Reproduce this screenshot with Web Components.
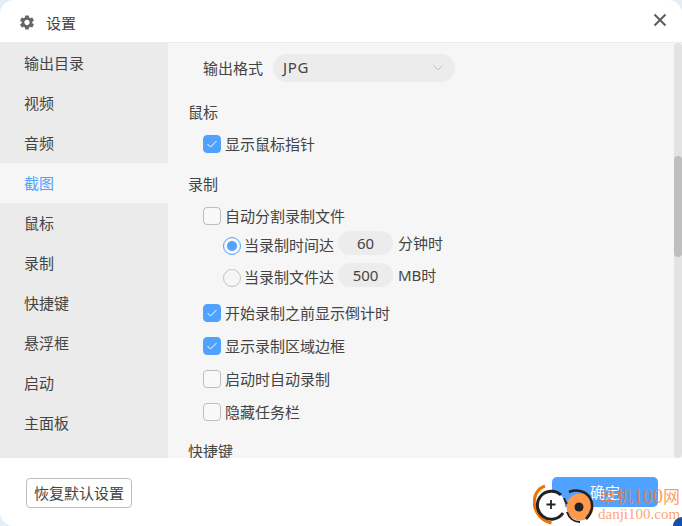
<!DOCTYPE html>
<html>
<head>
<meta charset="utf-8">
<style>
  html, body { margin: 0; height: 100%; background: #e6eef5; }
  body { font: 15px/20px "Noto Sans", "Noto Sans CJK SC", sans-serif; color: #444; overflow: hidden; }
</style>
</head>
<body>
<settings-window>
  <nav-item>输出目录</nav-item>
  <nav-item>视频</nav-item>
  <nav-item>音频</nav-item>
  <nav-item active>截图</nav-item>
  <nav-item>鼠标</nav-item>
  <nav-item>录制</nav-item>
  <nav-item>快捷键</nav-item>
  <nav-item>悬浮框</nav-item>
  <nav-item>启动</nav-item>
  <nav-item>主面板</nav-item>

  <select-row slot="content" label="输出格式" value="JPG"></select-row>

  <section-title slot="content" style="margin-top:20px">鼠标</section-title>
  <check-row slot="content" checked style="margin-top:12px">显示鼠标指针</check-row>

  <section-title slot="content" style="margin-top:20px">录制</section-title>
  <check-row slot="content" style="margin-top:12px">自动分割录制文件</check-row>
  <radio-row slot="content" checked value="60" style="margin-top:5px">当录制时间达<span slot="unit">分钟时</span></radio-row>
  <radio-row slot="content" value="500" style="margin-top:8px">当录制文件达<span slot="unit">MB时</span></radio-row>
  <check-row slot="content" checked style="margin-top:16px">开始录制之前显示倒计时</check-row>
  <check-row slot="content" checked style="margin-top:13px">显示录制区域边框</check-row>
  <check-row slot="content" style="margin-top:13px">启动时自动录制</check-row>
  <check-row slot="content" style="margin-top:13px">隐藏任务栏</check-row>

  <section-title slot="content" style="margin-top:19px">快捷键</section-title>
</settings-window>
<danji-mark></danji-mark>

<script>
class SettingsWindow extends HTMLElement {
  constructor() {
    super();
    let sr = this.attachShadow({ mode: 'open' });
    sr.innerHTML = `
      <style>
        :host {
          display: flex;
          flex-direction: column;
          height: 526px;
          background: #fff;
          border-radius: 14px;
          overflow: hidden;
        }
        header {
          flex: none;
          display: flex;
          align-items: center;
          padding: 3px 15px 0 20px;
          height: 39px;
          border-bottom: 1px solid #ebebeb;
        }
        header .gear { width: 14px; height: 15px; margin-right: 12px; }
        header .name { flex: 1; }
        header .close { width: 14px; height: 14px; margin-top: -6px; }
        main { flex: none; height: 415px; display: flex; }
        aside { flex: none; width: 168px; background: #ebebeb; }
        .panel { flex: 1; position: relative; background: #f6f6f6; overflow: hidden; }
        .scroll { padding: 11px 0 0 20px; }
        .track {
          position: absolute; right: 0; top: 0; bottom: 0;
          width: 8px; border-radius: 4px; background: #e3e3e3;
        }
        .thumb {
          position: absolute; left: 0; top: 113px;
          width: 8px; height: 101px; border-radius: 4px; background: #bfbfbf;
        }
        footer {
          flex: 1;
          display: flex;
          align-items: center;
          justify-content: space-between;
          padding: 0 24px 0 26px;
        }
        .reset {
          box-sizing: border-box;
          height: 30px; padding: 0 7px;
          display: flex; align-items: center;
          border: 1px solid #bdbdbd; border-radius: 4px;
          position: relative; top: 1px;
        }
        .ok {
          box-sizing: border-box;
          width: 106px; height: 30px;
          display: flex; align-items: center; justify-content: center;
          background: #4fa2ff; color: #fff; border-radius: 5px;
        }
      </style>
      <header>
        <svg class="gear" viewBox="2.500 2 19 20"><path fill="#666" d="M19.140 12.940c.04-.3.06-.61.06-.94 0-.32-.02-.64-.07-.94l2.030-1.580c.18-.14.23-.41.12-.61l-1.920-3.320c-.12-.22-.37-.29-.59-.22l-2.390.96c-.5-.38-1.030-.7-1.620-.94l-.36-2.540c-.04-.24-.24-.41-.48-.41h-3.840c-.24 0-.43.17-.47.41l-.36 2.540c-.59.24-1.130.57-1.620.94l-2.390-.96c-.22-.08-.47 0-.59.22L2.740 8.870c-.12.21-.08.47.12.61l2.030 1.580c-.05.3-.09.63-.09.94s.02.64.07.94l-2.030 1.580c-.18.14-.23.41-.12.61l1.920 3.320c.12.22.37.29.59.22l2.390-.96c.5.38 1.030.7 1.620.94l.36 2.540c.05.24.24.41.48.41h3.840c.24 0 .44-.17.47-.41l.36-2.540c.59-.24 1.130-.56 1.620-.94l2.390.96c.22.08.47 0 .59-.22l1.920-3.320c.12-.22.07-.47-.12-.61l-2.010-1.580zM12 15.600c-1.980 0-3.600-1.620-3.600-3.600s1.620-3.600 3.600-3.600 3.600 1.620 3.600 3.600-1.620 3.600-3.600 3.600z"/></svg>
        <span class="name">设置</span>
        <svg class="close" viewBox="0 0 14 14"><path stroke="#5c5c5c" stroke-width="2" d="M1.500 1.500l11 11M12.500 1.500l-11 11"/></svg>
      </header>
      <main>
        <aside><slot></slot></aside>
        <div class="panel">
          <div class="scroll"><slot name="content"></slot></div>
          <div class="track"><div class="thumb"></div></div>
        </div>
      </main>
      <footer>
        <div class="reset">恢复默认设置</div>
        <div class="ok">确定</div>
      </footer>
    `;
  }
}

class NavItem extends HTMLElement {
  constructor() {
    super();
    let sr = this.attachShadow({ mode: 'open' });
    sr.innerHTML = `
      <style>
        :host {
          display: flex;
          align-items: center;
          box-sizing: border-box;
          height: 40px;
          padding: 0 0 1px 24px;
        }
        :host([active]) { background: #f6f6f6; color: #4fa2ff; }
      </style>
      <slot></slot>
    `;
  }
}

class SelectRow extends HTMLElement {
  constructor() {
    super();
    let sr = this.attachShadow({ mode: 'open' });
    sr.innerHTML = `
      <style>
        :host { display: flex; align-items: center; height: 28px; padding-left: 15px; }
        .box {
          box-sizing: border-box;
          width: 182px; height: 28px; margin-left: 10px; padding: 0 12px 0 10px;
          display: flex; align-items: center; justify-content: space-between;
          background: #ececec; border-radius: 14px;
        }
        .box span { letter-spacing: .6px; position: relative; top: -1px; }
        svg { width: 10px; height: 6px; }
      </style>
      <span>${this.getAttribute('label')}</span>
      <div class="box">
        <span>${this.getAttribute('value')}</span>
        <svg viewBox="0 0 10 6"><path fill="none" stroke="#bdbdbd" d="M.5.5L5 5 9.500.5"/></svg>
      </div>
    `;
  }
}

class SectionTitle extends HTMLElement {
  constructor() {
    super();
    let sr = this.attachShadow({ mode: 'open' });
    sr.innerHTML = `
      <style>:host { display: block; height: 20px; }</style>
      <slot></slot>
    `;
  }
}

class CheckRow extends HTMLElement {
  constructor() {
    super();
    let sr = this.attachShadow({ mode: 'open' });
    sr.innerHTML = `
      <style>
        :host { display: flex; align-items: center; height: 20px; padding-left: 15px; }
        .box {
          box-sizing: border-box;
          width: 18px; height: 18px; margin-right: 4px;
          border: 1px solid #bdbdbd; border-radius: 4px; background: #f8f8f8;
        }
        :host([checked]) .box { background: #4fa2ff; border-color: #4fa2ff; }
        svg { display: none; width: 16px; height: 16px; }
        :host([checked]) svg { display: block; }
      </style>
      <div class="box"><svg viewBox="0 0 16 16"><path fill="none" stroke="#fff" d="M3.500 8l3 3 6-6"/></svg></div>
      <slot></slot>
    `;
  }
}

class RadioRow extends HTMLElement {
  constructor() {
    super();
    let sr = this.attachShadow({ mode: 'open' });
    sr.innerHTML = `
      <style>
        :host { display: flex; align-items: center; height: 24px; padding-left: 35px; }
        .dot {
          box-sizing: border-box;
          flex: none; width: 18px; height: 18px; margin: 6px 3px 0 0;
          border: 1px solid #c4c4c4; border-radius: 50%;
          display: flex; align-items: center; justify-content: center;
        }
        :host([checked]) .dot { border-color: #4fa2ff; }
        :host([checked]) .dot::after {
          content: ''; width: 10px; height: 10px; border-radius: 50%; background: #4fa2ff;
        }
        .text { position: relative; top: 2px; }
        .num {
          box-sizing: border-box;
          width: 55px; height: 24px; margin: 0 5px 0 4px;
          display: flex; align-items: center; justify-content: center;
          background: #ececec; border-radius: 12px;
        }
      </style>
      <div class="dot"></div>
      <span class="text"><slot></slot></span>
      <div class="num">${this.getAttribute('value')}</div>
      <slot name="unit"></slot>
    `;
  }
}

class DanjiMark extends HTMLElement {
  constructor() {
    super();
    let sr = this.attachShadow({ mode: 'open' });
    sr.innerHTML = `
      <style>
        :host { position: absolute; left: 533px; top: 484px; width: 149px; height: 42px; }
        svg { position: absolute; left: 0; top: 0; width: 64px; height: 42px; }
        .cn {
          position: absolute; left: 66px; top: 1px; white-space: nowrap;
          font: 17px/22px "Noto Sans CJK SC", sans-serif; color: rgba(255,120,40,.72);
        }
        .cn span { font: 20px/22px "Liberation Serif", serif; }
        .en {
          position: absolute; left: 65px; top: 22px; white-space: nowrap;
          font: 15px/17px "Liberation Serif", serif; color: rgba(255,125,50,.72);
        }
        .corner {
          position: absolute; right: 0; bottom: 0; width: 9px; height: 9px;
          background: #1450a8; border-top-left-radius: 9px;
        }
      </style>
      <svg viewBox="0 0 64 42">
        <path fill="none" stroke="#f57000" stroke-width="3" d="M12 2C3 5 .500 14 1.500 21c1 9 8 16 17 18"/>
        <circle cx="18" cy="21" r="14" fill="#fff"/>
        <path fill="none" stroke="#222" stroke-width="3" d="M28 11a14 14 0 1 0 2 18"/>
        <path stroke="#222" stroke-width="1.800" d="M13.500 20.500h9M18 16v9"/>
        <circle cx="47" cy="23" r="13.500" fill="#ff9a4d"/>
        <path fill="none" stroke="#222" stroke-width="2.500" d="M36 8c8-3 17-1 21 6 4 7 2 15-4 21"/>
        <path fill="none" stroke="#222" stroke-width="2" d="M31 14c1 3 2 5 3 6"/>
        <path fill="none" stroke="#222" stroke-width="2" d="M34 28c2 6 7 10 13 10"/>
        <circle cx="46" cy="23" r="4.500" fill="#222"/>
      </svg>
      <div class="cn">单机<span>100</span>网</div>
      <div class="en">danji100.com</div>
      <div class="corner"></div>
    `;
  }
}

customElements.define('settings-window', SettingsWindow);
customElements.define('nav-item', NavItem);
customElements.define('select-row', SelectRow);
customElements.define('section-title', SectionTitle);
customElements.define('check-row', CheckRow);
customElements.define('radio-row', RadioRow);
customElements.define('danji-mark', DanjiMark);
</script>
</body>
</html>
